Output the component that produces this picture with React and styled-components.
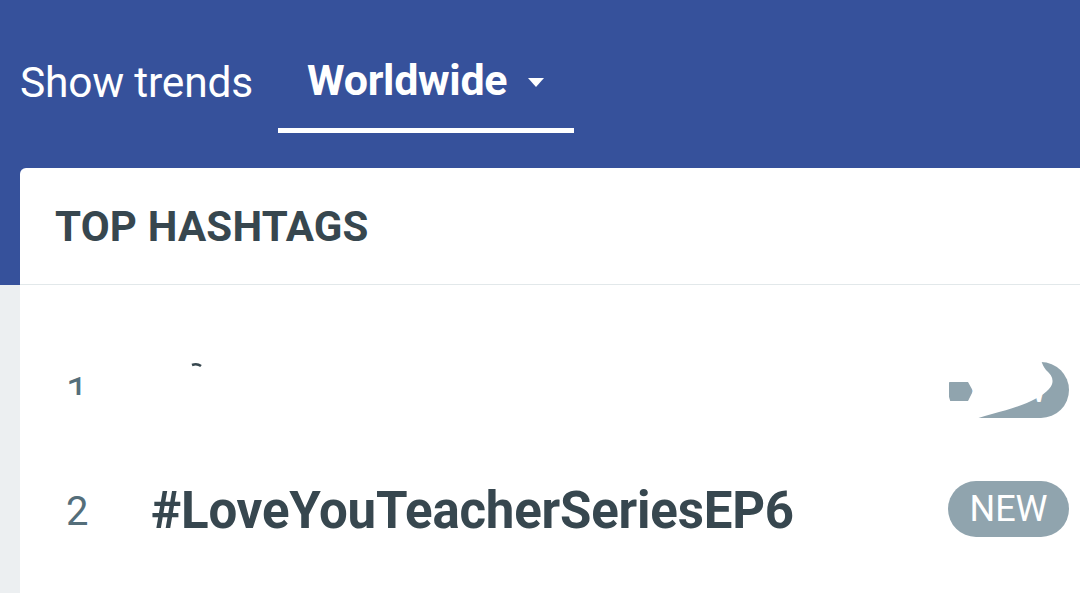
import React from 'react'
import styled, { createGlobalStyle } from 'styled-components'

const GlobalStyle = createGlobalStyle`
  html, body {
    margin: 0;
    padding: 0;
    overflow: hidden;
  }
  body {
    font-family: Roboto, "Liberation Sans", sans-serif;
    background: linear-gradient(#36519b 0, #36519b 285px, #eceff1 285px);
    min-height: 593px;
  }
`

const Page = styled.div`
  width: 1080px;
  height: 593px;
  overflow: hidden;
`

const TopBar = styled.div`
  display: flex;
  align-items: flex-start;
  height: 168px;
  padding-left: 20px;
  box-sizing: border-box;
`

const Label = styled.div`
  color: #fff;
  font-size: 42.5px;
  line-height: 42px;
  margin-top: 62px;
  letter-spacing: -0.2px;
`

const Tab = styled.div`
  display: flex;
  align-items: center;
  gap: 21px;
  margin-left: 25px;
  margin-top: 56px;
  width: 296px;
  height: 77px;
  box-sizing: border-box;
  padding: 0 24px 24px 29px;
  border-bottom: 5px solid #fff;
  color: #fff;
  font-size: 43px;
  font-weight: 700;
  letter-spacing: -0.3px;
`

const Caret = styled.span`
  width: 0;
  height: 0;
  border-left: 8.5px solid transparent;
  border-right: 8.5px solid transparent;
  border-top: 9px solid #fff;
  margin-top: 4px;
`

const Card = styled.div`
  margin-left: 20px;
  margin-right: -10px;
  background: #fff;
  border-radius: 6px 6px 0 0;
  height: 425px;
`

const CardHeader = styled.div`
  display: flex;
  align-items: center;
  height: 117px;
  padding-left: 35px;
  box-sizing: border-box;
  border-bottom: 1px solid #e2e8ea;
  color: #37474f;
  font-size: 42px;
  font-weight: 700;
  letter-spacing: 0.2px;
`

const List = styled.div`
  padding-top: 45px;
`

const Row = styled.div`
  position: relative;
  display: flex;
  align-items: center;
  height: 119px;
  padding: 0 21px 0 46px;
`

const Rank = styled.span`
  width: 85px;
  color: #546e7a;
  font-size: 40px;
  margin-top: 6px;
`

const Tag = styled.span`
  flex: 1;
  color: #37474f;
  font-size: 51px;
  font-weight: 700;
  letter-spacing: -0.2px;
  margin-top: 4px;
`

const Badge = styled.span`
  display: flex;
  align-items: center;
  justify-content: center;
  width: 121px;
  height: 56px;
  border-radius: 28px;
  background: #90a4ae;
  color: #fff;
  font-size: 36px;
`

const Smudge = styled.svg`
  position: absolute;
  left: 0;
  top: 0;
`

const rows = [
  { rank: 1, tag: '', hidden: true },
  { rank: 2, tag: '#LoveYouTeacherSeriesEP6' }
]

export default function App() {
  return (
    <Page>
      <GlobalStyle />
      <TopBar>
        <Label>Show trends</Label>
        <Tab>
          Worldwide
          <Caret />
        </Tab>
      </TopBar>
      <Card>
        <CardHeader>TOP HASHTAGS</CardHeader>
        <List>
          {rows.map(row => (
            <Row key={row.rank}>
              <Rank>{row.rank}</Rank>
              <Tag>{row.tag}</Tag>
              <Badge>NEW</Badge>
              {row.hidden && (
                <Smudge width="1060" height="119" viewBox="20 331 1060 119">
                  <rect x="40" y="396" width="110" height="60" fill="#fff" />
                  <path d="M192 366 Q197 364 201 367" stroke="#37474f" strokeWidth="2.5" fill="none" />
                  <path
                    fill="#fff"
                    fillRule="evenodd"
                    d="M940 350 L1040 350 C1040 360 1042 366 1046 371 C1053 377 1055 383 1049 390 C1040 400 1020 408 992 415 C982 418 974 420 968 423 L940 423 Z M949 383 L968 383 L973 392 L968 402 L949 402 Z"
                  />
                </Smudge>
              )}
            </Row>
          ))}
        </List>
      </Card>
    </Page>
  )
}
